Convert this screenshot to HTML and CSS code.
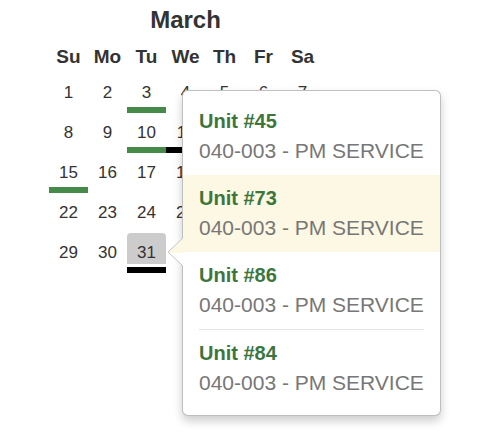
FILE: index.html
```html
<!DOCTYPE html>
<html lang="en">
<head>
  <meta charset="UTF-8">
  <meta name="viewport" content="width=device-width, initial-scale=1.0">
  <title>Service Calendar</title>
  <link rel="stylesheet" href="styles.css">
</head>
<body>
  <div class="calendar">
    <h1 class="month">March</h1>

    <div class="weekdays">
      <span>Su</span><span>Mo</span><span>Tu</span><span>We</span><span>Th</span><span>Fr</span><span>Sa</span>
    </div>

    <div class="days">
      <div class="day"><div class="num">1</div><div class="bar"></div></div>
      <div class="day"><div class="num">2</div><div class="bar"></div></div>
      <div class="day"><div class="num">3</div><div class="bar done"></div></div>
      <div class="day"><div class="num">4</div><div class="bar"></div></div>
      <div class="day"><div class="num">5</div><div class="bar"></div></div>
      <div class="day"><div class="num">6</div><div class="bar"></div></div>
      <div class="day"><div class="num">7</div><div class="bar"></div></div>

      <div class="day"><div class="num">8</div><div class="bar"></div></div>
      <div class="day"><div class="num">9</div><div class="bar"></div></div>
      <div class="day"><div class="num">10</div><div class="bar done"></div></div>
      <div class="day"><div class="num">11</div><div class="bar due"></div></div>
      <div class="day"><div class="num">12</div><div class="bar"></div></div>
      <div class="day"><div class="num">13</div><div class="bar"></div></div>
      <div class="day"><div class="num">14</div><div class="bar"></div></div>

      <div class="day"><div class="num">15</div><div class="bar done"></div></div>
      <div class="day"><div class="num">16</div><div class="bar"></div></div>
      <div class="day"><div class="num">17</div><div class="bar"></div></div>
      <div class="day"><div class="num">18</div><div class="bar"></div></div>
      <div class="day"><div class="num">19</div><div class="bar"></div></div>
      <div class="day"><div class="num">20</div><div class="bar"></div></div>
      <div class="day"><div class="num">21</div><div class="bar"></div></div>

      <div class="day"><div class="num">22</div><div class="bar"></div></div>
      <div class="day"><div class="num">23</div><div class="bar"></div></div>
      <div class="day"><div class="num">24</div><div class="bar"></div></div>
      <div class="day"><div class="num">25</div><div class="bar"></div></div>
      <div class="day"><div class="num">26</div><div class="bar"></div></div>
      <div class="day"><div class="num">27</div><div class="bar"></div></div>
      <div class="day"><div class="num">28</div><div class="bar"></div></div>

      <div class="day"><div class="num">29</div><div class="bar"></div></div>
      <div class="day"><div class="num">30</div><div class="bar"></div></div>
      <div class="day selected"><div class="num">31</div><div class="bar due"></div></div>
    </div>
  </div>

  <div class="popover">
    <svg class="arrow" width="16" height="28" viewBox="0 0 16 28">
      <polygon points="16,0 1,14 2.07,15 16,15" fill="#fcf8e3"/>
      <polygon points="2.07,15 16,28 16,15" fill="#fff"/>
      <polyline points="16,0 1,14 16,28" fill="none" stroke="#c4c4c4" stroke-width="1"/>
    </svg>

    <div class="item">
      <div class="unit">Unit #45</div>
      <div class="task">040-003 - PM SERVICE</div>
    </div>
    <div class="item active">
      <div class="unit">Unit #73</div>
      <div class="task">040-003 - PM SERVICE</div>
    </div>
    <div class="item">
      <div class="unit">Unit #86</div>
      <div class="task">040-003 - PM SERVICE</div>
    </div>
    <hr class="sep">
    <div class="item">
      <div class="unit">Unit #84</div>
      <div class="task">040-003 - PM SERVICE</div>
    </div>
  </div>
</body>
</html>
```

FILE: styles.css
```css
body {
  font-family: "Liberation Sans", Arial, sans-serif;
  margin: 0;
  padding-top: 5px;
  color: #333;
  background: #fff;
}
.calendar {
  width: 273px;
  margin-left: 49px;
}
.month {
  margin: 0;
  font-size: 24px;
  line-height: 30px;
  text-align: center;
}
.weekdays {
  display: grid;
  grid-template-columns: repeat(7, 39px);
  margin-top: 10px;
  font-size: 19px;
  font-weight: bold;
  line-height: 24px;
  text-align: center;
}
.days {
  display: grid;
  grid-template-columns: repeat(7, 39px);
  margin-top: 4px;
  font-size: 17px;
  text-align: center;
}
.num {
  height: 23px;
  padding-top: 8px;
  line-height: 23px;
}
.selected .num {
  background-color: #ccc;
  border-radius: 4px 4px 0 0;
}
.bar {
  height: 6px;
  margin-top: 3px;
}
.bar.done {
  background-color: #458a48;
}
.bar.due {
  background-color: #000;
}
.popover {
  position: absolute;
  left: 182px;
  top: 90px;
  width: 257px;
  padding: 7px 0 8px;
  background: #fff;
  border: 1px solid rgba(0, 0, 0, 0.25);
  border-radius: 6px;
  box-shadow: 0 5px 10px rgba(0, 0, 0, 0.2);
}
.arrow {
  position: absolute;
  left: -16px;
  top: 147px;
  display: block;
}
.item {
  padding: 10px 16px 9px;
}
.item.active {
  background-color: #fcf8e3;
}
.unit {
  color: #3c763d;
  font-size: 20px;
  font-weight: bold;
  line-height: 26px;
}
.task {
  margin-top: 2px;
  color: #777;
  font-size: 21px;
  line-height: 30px;
}
.sep {
  margin: 0 16px;
  border: 0;
  border-top: 1px solid #e5e5e5;
}
```
